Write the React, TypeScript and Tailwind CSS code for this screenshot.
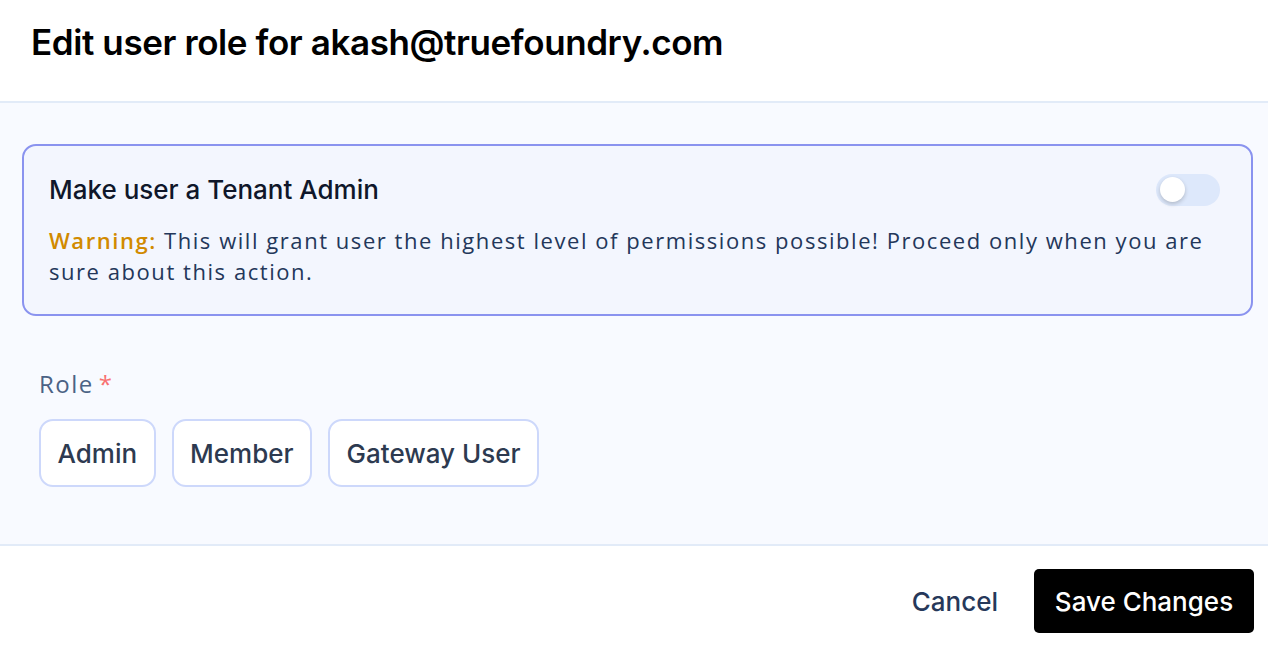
import { useState } from "react";

const roles = ["Admin", "Member", "Gateway User"];

export default function App() {
  const [tenantAdmin, setTenantAdmin] = useState(false);
  const [role, setRole] = useState<string | null>(null);

  return (
    <div className="flex h-[646px] w-[1268px] flex-col bg-white font-['Inter',sans-serif]">
      {/* header */}
      <div className="h-[103px] shrink-0 border-b-2 border-[#e2ebf8] px-[31px] pt-[20px]">
        <h1 className="text-[35px] font-semibold leading-[44px] tracking-[-0.4px] text-black">
          Edit user role for akash@truefoundry.com
        </h1>
      </div>

      {/* body */}
      <div className="flex flex-1 flex-col bg-[#f8faff] pl-[22px] pr-[15px] pt-[41px]">
        <div className="rounded-[14px] border-2 border-[#8a93ef] bg-[#f3f6fe] px-[25px] pb-[27px] pt-[24px]">
          <div className="flex items-center justify-between">
            <span className="text-[26px] font-medium text-[#0f172a]">Make user a Tenant Admin</span>
            <button
              onClick={() => setTenantAdmin(!tenantAdmin)}
              className={`mr-[6px] flex h-[32px] w-[64px] items-center rounded-full px-[4px] ${
                tenantAdmin ? "justify-end bg-[#4f46e5]" : "justify-start bg-[#dde8fb]"
              }`}
            >
              <span className="h-[25px] w-[25px] rounded-full bg-white shadow-[0_2px_4px_rgba(0,0,0,0.2)]" />
            </button>
          </div>
          <p className="mt-[16px] font-['Open_Sans',sans-serif] text-[22px] leading-[31px] tracking-[1.55px] text-[#23375a]">
            <span className="font-semibold text-[#d18a00]">Warning:</span> This will grant user the highest level of
            permissions possible! Proceed only when you are sure about this action.
          </p>
        </div>

        <div className="mt-[50px] pl-[17px]">
          <div className="flex items-center gap-[5px] font-['Open_Sans',sans-serif] text-[24px] tracking-[1.5px] text-[#4b6285]">
            Role <span className="text-[#f87171]">*</span>
          </div>
          <div className="mt-[17px] flex gap-[16px]">
            {roles.map((r) => (
              <button
                key={r}
                onClick={() => setRole(r)}
                className={`h-[68px] rounded-[14px] border-2 bg-white px-[16.5px] text-[26px] font-medium text-[#2d3a50] ${
                  role === r ? "border-[#6366f1]" : "border-[#cdd8fb]"
                }`}
              >
                {r}
              </button>
            ))}
          </div>
        </div>
      </div>

      {/* footer */}
      <div className="flex h-[102px] shrink-0 items-start justify-end gap-[36px] border-t-2 border-[#e2ebf8] px-[14px] pt-[23px]">
        <button className="h-[64px] text-[26px] font-medium text-[#26385a]">Cancel</button>
        <button className="h-[64px] w-[220px] rounded-[5px] bg-black text-[26px] font-medium text-white">
          Save Changes
        </button>
      </div>
    </div>
  );
}
